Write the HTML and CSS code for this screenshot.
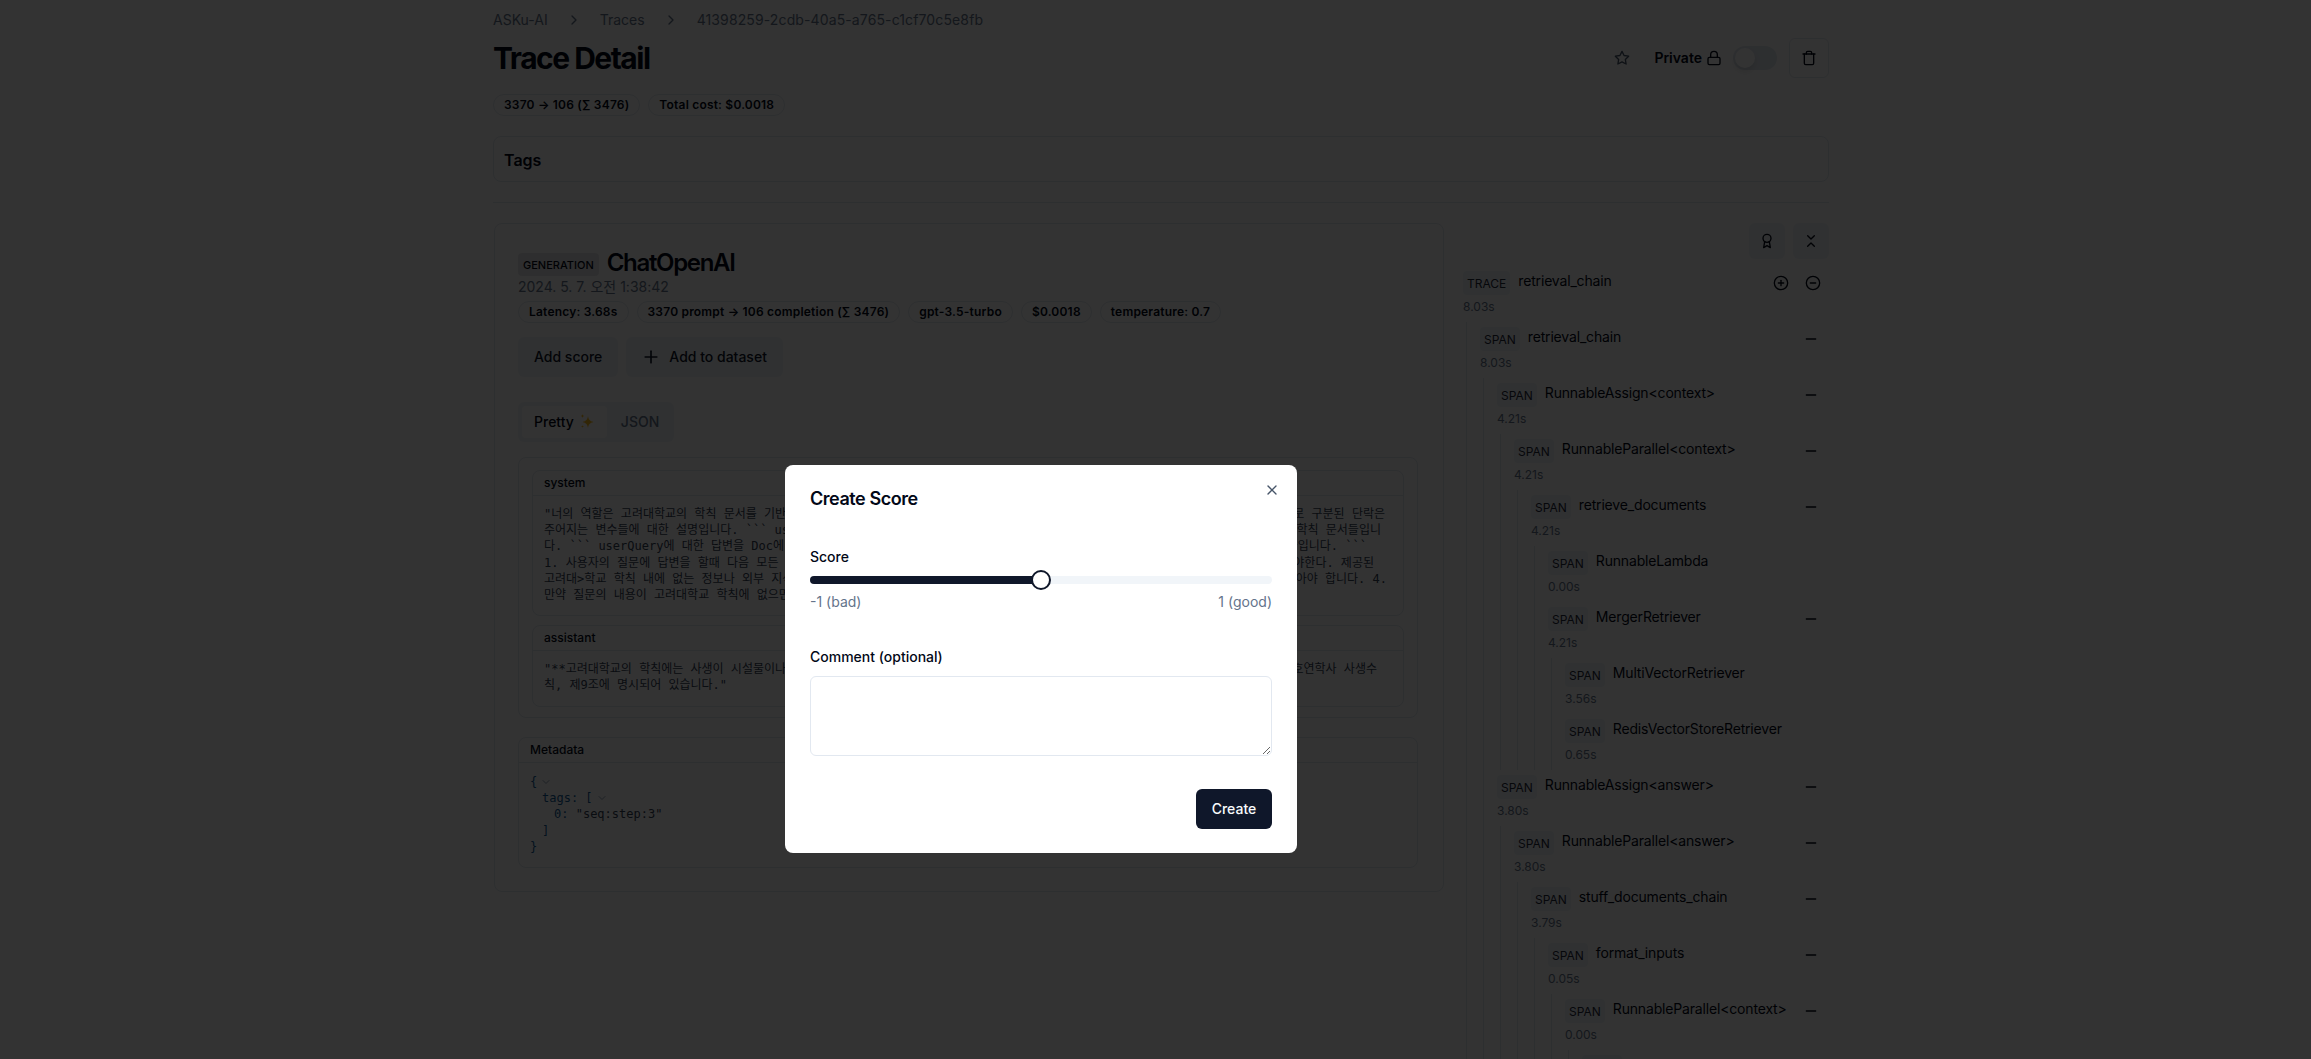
FILE: index.html
```html
<!DOCTYPE html>
<html lang="en">
<head>
    <meta charset="UTF-8">
    <meta name="viewport" content="width=device-width, initial-scale=1.0">
    <title>Trace Detail</title>
    <link rel="stylesheet" href="styles.css">
</head>
<body>
    <!-- icon set -->
    <svg class="icon-defs" aria-hidden="true">
        <symbol id="i-chevron-right" viewBox="0 0 24 24"><path d="m9 18 6-6-6-6"/></symbol>
        <symbol id="i-chevron-down" viewBox="0 0 24 24"><path d="m6 9 6 6 6-6"/></symbol>
        <symbol id="i-star" viewBox="0 0 24 24"><polygon points="12 2 15.09 8.26 22 9.27 17 14.14 18.18 21.02 12 17.77 5.82 21.02 7 14.14 2 9.27 8.91 8.26 12 2"/></symbol>
        <symbol id="i-lock" viewBox="0 0 24 24"><rect x="3" y="11" width="18" height="11" rx="2" ry="2"/><path d="M7 11V7a5 5 0 0 1 10 0v4"/></symbol>
        <symbol id="i-trash" viewBox="0 0 24 24"><path d="M3 6h18"/><path d="M19 6v14c0 1-1 2-2 2H7c-1 0-2-1-2-2V6"/><path d="M8 6V4c0-1 1-2 2-2h4c1 0 2 1 2 2v2"/></symbol>
        <symbol id="i-award" viewBox="0 0 24 24"><circle cx="12" cy="8" r="6"/><path d="M15.477 12.89 17 22l-5-3-5 3 1.523-9.11"/></symbol>
        <symbol id="i-collapse" viewBox="0 0 24 24"><path d="m7 20 5-5 5 5"/><path d="m7 4 5 5 5-5"/></symbol>
        <symbol id="i-plus" viewBox="0 0 24 24"><path d="M5 12h14"/><path d="M12 5v14"/></symbol>
        <symbol id="i-minus" viewBox="0 0 24 24"><path d="M5 12h14"/></symbol>
        <symbol id="i-plus-circle" viewBox="0 0 24 24"><circle cx="12" cy="12" r="10"/><path d="M8 12h8"/><path d="M12 8v8"/></symbol>
        <symbol id="i-minus-circle" viewBox="0 0 24 24"><circle cx="12" cy="12" r="10"/><path d="M8 12h8"/></symbol>
        <symbol id="i-x" viewBox="0 0 24 24"><path d="M18 6 6 18"/><path d="m6 6 12 12"/></symbol>
    </svg>

    <div class="page">
        <nav class="breadcrumb">
            <span>ASKu-AI</span>
            <svg class="icon crumb-sep"><use href="#i-chevron-right"/></svg>
            <span>Traces</span>
            <svg class="icon crumb-sep"><use href="#i-chevron-right"/></svg>
            <span class="crumb-id">41398259-2cdb-40a5-a765-c1cf70c5e8fb</span>
        </nav>

        <header class="page-header">
            <h1>Trace Detail</h1>
            <div class="header-actions">
                <span class="star-btn"><svg class="icon icon-muted"><use href="#i-star"/></svg></span>
                <span class="private-label">Private</span>
                <svg class="icon"><use href="#i-lock"/></svg>
                <span class="switch"><span class="switch-thumb"></span></span>
                <span class="outline-btn"><svg class="icon"><use href="#i-trash"/></svg></span>
            </div>
        </header>

        <div class="badge-row summary-badges">
            <span class="badge">3370 → 106 (∑ 3476)</span>
            <span class="badge">Total cost: $0.0018</span>
        </div>

        <section class="tags-card">Tags</section>
        <hr class="divider">

        <div class="detail-grid">
            <main class="generation-card">
                <div class="generation-title">
                    <span class="type-badge">GENERATION</span>
                    <h2>ChatOpenAI</h2>
                </div>
                <p class="timestamp">2024. 5. 7. 오전 1:38:42</p>
                <div class="badge-row meta-badges">
                    <span class="badge">Latency: 3.68s</span>
                    <span class="badge">3370 prompt → 106 completion (∑ 3476)</span>
                    <span class="badge">gpt-3.5-turbo</span>
                    <span class="badge">$0.0018</span>
                    <span class="badge">temperature: 0.7</span>
                </div>
                <div class="button-row">
                    <button class="soft-btn">Add score</button>
                    <button class="soft-btn"><svg class="icon icon-plus"><use href="#i-plus"/></svg>Add to dataset</button>
                </div>
                <div class="tabs">
                    <span class="tab tab-active">Pretty
                        <svg class="sparkle" viewBox="0 0 16 16"><path d="M9 2c.6 3.600 1.700 5 5.500 6-3.800 1-4.900 2.400-5.500 6-.6-3.600-1.700-5-5.500-6C7.300 7 8.400 5.600 9 2z"/><path d="M3.500 0c.2 1.200.6 1.700 1.800 2-1.200.3-1.600.8-1.800 2-.2-1.200-.6-1.700-1.800-2 1.200-.3 1.600-.8 1.800-2z"/><path d="M3.500 11c.2 1 .5 1.300 1.500 1.500-1 .2-1.300.5-1.500 1.500-.2-1-.5-1.300-1.500-1.500 1-.2 1.300-.5 1.500-1.500z"/></svg>
                    </span>
                    <span class="tab">JSON</span>
                </div>

                <div class="io-wrapper">
                    <section class="io-card">
                        <div class="io-head">system</div>
                        <div class="io-body io-message">
                            <div class="msg-line"><span>"너의 역할은 고려대학교의 학칙 문서를 기반으로 답변</span><span>로 구분된 단락은</span></div>
                            <div class="msg-line"><span>주어지는 변수들에 대한 설명입니다. ``` userQuery</span><span>학칙 문서들입니</span></div>
                            <div class="msg-line"><span>다. ``` userQuery에 대한 답변을 Doc에 있는</span><span>들입니다. ```</span></div>
                            <div class="msg-line"><span>1. 사용자의 질문에 답변을 할때 다음 모든 규칙을</span><span>야한다. 제공된</span></div>
                            <div class="msg-line"><span>고려대>학교 학칙 내에 없는 정보나 외부 지식을</span><span>않아야 합니다. 4.</span></div>
                            <div class="msg-line"><span>만약 질문의 내용이 고려대학교 학칙에 없으면 답변</span></div>
                        </div>
                    </section>
                    <section class="io-card assistant-card">
                        <div class="io-head">assistant</div>
                        <div class="io-body io-message">
                            <div class="msg-line"><span>"**고려대학교의 학칙에는 사생이 시설물이나 기물을</span><span>호연학사 사생수</span></div>
                            <div class="msg-line"><span>칙, 제9조에 명시되어 있습니다."</span></div>
                        </div>
                    </section>
                </div>

                <section class="io-card metadata-card">
                    <div class="io-head">Metadata</div>
                    <div class="io-body json-view">
                        <div><span class="json-key">{</span><svg class="icon json-toggle"><use href="#i-chevron-down"/></svg></div>
                        <div class="indent-1"><span class="json-key">tags: [</span><svg class="icon json-toggle"><use href="#i-chevron-down"/></svg></div>
                        <div class="indent-2"><span class="json-key">0:</span> <span class="json-string">"seq:step:3"</span></div>
                        <div class="indent-1"><span class="json-key">]</span></div>
                        <div><span class="json-key">}</span></div>
                    </div>
                </section>
            </main>

            <aside class="trace-panel">
                <div class="panel-tools">
                    <span class="square-btn"><svg class="icon"><use href="#i-award"/></svg></span>
                    <span class="square-btn"><svg class="icon"><use href="#i-collapse"/></svg></span>
                </div>

                <div class="tree">
                    <div class="node">
                        <div class="row">
                            <div class="row-info">
                                <div class="row-head"><span class="kind">TRACE</span><span class="name">retrieval_chain</span></div>
                                <div class="dur">8.03s</div>
                            </div>
                            <div class="row-actions">
                                <svg class="icon"><use href="#i-plus-circle"/></svg>
                                <svg class="icon"><use href="#i-minus-circle"/></svg>
                            </div>
                        </div>
                        <div class="children">
                            <div class="node">
                                <div class="row">
                                    <div class="row-info">
                                        <div class="row-head"><span class="kind">SPAN</span><span class="name">retrieval_chain</span></div>
                                        <div class="dur">8.03s</div>
                                    </div>
                                    <svg class="icon fold"><use href="#i-minus"/></svg>
                                </div>
                                <div class="children">
                                    <div class="node">
                                        <div class="row">
                                            <div class="row-info">
                                                <div class="row-head"><span class="kind">SPAN</span><span class="name">RunnableAssign&lt;context&gt;</span></div>
                                                <div class="dur">4.21s</div>
                                            </div>
                                            <svg class="icon fold"><use href="#i-minus"/></svg>
                                        </div>
                                        <div class="children">
                                            <div class="node">
                                                <div class="row">
                                                    <div class="row-info">
                                                        <div class="row-head"><span class="kind">SPAN</span><span class="name">RunnableParallel&lt;context&gt;</span></div>
                                                        <div class="dur">4.21s</div>
                                                    </div>
                                                    <svg class="icon fold"><use href="#i-minus"/></svg>
                                                </div>
                                                <div class="children">
                                                    <div class="node">
                                                        <div class="row">
                                                            <div class="row-info">
                                                                <div class="row-head"><span class="kind">SPAN</span><span class="name">retrieve_documents</span></div>
                                                                <div class="dur">4.21s</div>
                                                            </div>
                                                            <svg class="icon fold"><use href="#i-minus"/></svg>
                                                        </div>
                                                        <div class="children">
                                                            <div class="node">
                                                                <div class="row">
                                                                    <div class="row-info">
                                                                        <div class="row-head"><span class="kind">SPAN</span><span class="name">RunnableLambda</span></div>
                                                                        <div class="dur">0.00s</div>
                                                                    </div>
                                                                </div>
                                                            </div>
                                                            <div class="node">
                                                                <div class="row">
                                                                    <div class="row-info">
                                                                        <div class="row-head"><span class="kind">SPAN</span><span class="name">MergerRetriever</span></div>
                                                                        <div class="dur">4.21s</div>
                                                                    </div>
                                                                    <svg class="icon fold"><use href="#i-minus"/></svg>
                                                                </div>
                                                                <div class="children">
                                                                    <div class="node">
                                                                        <div class="row">
                                                                            <div class="row-info">
                                                                                <div class="row-head"><span class="kind">SPAN</span><span class="name">MultiVectorRetriever</span></div>
                                                                                <div class="dur">3.56s</div>
                                                                            </div>
                                                                        </div>
                                                                    </div>
                                                                    <div class="node">
                                                                        <div class="row">
                                                                            <div class="row-info">
                                                                                <div class="row-head"><span class="kind">SPAN</span><span class="name">RedisVectorStoreRetriever</span></div>
                                                                                <div class="dur">0.65s</div>
                                                                            </div>
                                                                        </div>
                                                                    </div>
                                                                </div>
                                                            </div>
                                                        </div>
                                                    </div>
                                                </div>
                                            </div>
                                        </div>
                                    </div>
                                    <div class="node">
                                        <div class="row">
                                            <div class="row-info">
                                                <div class="row-head"><span class="kind">SPAN</span><span class="name">RunnableAssign&lt;answer&gt;</span></div>
                                                <div class="dur">3.80s</div>
                                            </div>
                                            <svg class="icon fold"><use href="#i-minus"/></svg>
                                        </div>
                                        <div class="children">
                                            <div class="node">
                                                <div class="row">
                                                    <div class="row-info">
                                                        <div class="row-head"><span class="kind">SPAN</span><span class="name">RunnableParallel&lt;answer&gt;</span></div>
                                                        <div class="dur">3.80s</div>
                                                    </div>
                                                    <svg class="icon fold"><use href="#i-minus"/></svg>
                                                </div>
                                                <div class="children">
                                                    <div class="node">
                                                        <div class="row">
                                                            <div class="row-info">
                                                                <div class="row-head"><span class="kind">SPAN</span><span class="name">stuff_documents_chain</span></div>
                                                                <div class="dur">3.79s</div>
                                                            </div>
                                                            <svg class="icon fold"><use href="#i-minus"/></svg>
                                                        </div>
                                                        <div class="children">
                                                            <div class="node">
                                                                <div class="row">
                                                                    <div class="row-info">
                                                                        <div class="row-head"><span class="kind">SPAN</span><span class="name">format_inputs</span></div>
                                                                        <div class="dur">0.05s</div>
                                                                    </div>
                                                                    <svg class="icon fold"><use href="#i-minus"/></svg>
                                                                </div>
                                                                <div class="children">
                                                                    <div class="node">
                                                                        <div class="row">
                                                                            <div class="row-info">
                                                                                <div class="row-head"><span class="kind">SPAN</span><span class="name">RunnableParallel&lt;context&gt;</span></div>
                                                                                <div class="dur">0.00s</div>
                                                                            </div>
                                                                            <svg class="icon fold"><use href="#i-minus"/></svg>
                                                                        </div>
                                                                        <div class="children">
                                                                            <div class="node">
                                                                                <div class="row">
                                                                                    <div class="row-info">
                                                                                        <div class="row-head"><span class="kind">SPAN</span><span class="name">RunnableLambda</span></div>
                                                                                        <div class="dur">0.00s</div>
                                                                                    </div>
                                                                                </div>
                                                                            </div>
                                                                        </div>
                                                                    </div>
                                                                </div>
                                                            </div>
                                                        </div>
                                                    </div>
                                                </div>
                                            </div>
                                        </div>
                                    </div>
                                </div>
                            </div>
                        </div>
                    </div>
                </div>
            </aside>
        </div>
    </div>

    <div class="overlay">
        <div class="modal">
            <svg class="icon modal-close"><use href="#i-x"/></svg>
            <h3>Create Score</h3>
            <label class="field-label score-label">Score</label>
            <div class="slider">
                <div class="slider-track"><div class="slider-fill"></div></div>
                <span class="slider-thumb"></span>
            </div>
            <div class="slider-labels">
                <span>-1 (bad)</span>
                <span>1 (good)</span>
            </div>
            <label class="field-label comment-label" for="comment">Comment (optional)</label>
            <textarea id="comment" class="comment-input"></textarea>
            <div class="modal-footer">
                <button class="primary-btn">Create</button>
            </div>
        </div>
    </div>
</body>
</html>
```

FILE: styles.css
```css
* {
    box-sizing: border-box;
}

html, body {
    height: 1059px;
    overflow: hidden;
}

body {
    margin: 0;
    background-color: #fff;
    color: #020817;
    font-family: Inter, "Noto Sans CJK KR", sans-serif;
    font-size: 14px;
    line-height: 20px;
}

h1, h2, h3, p {
    margin: 0;
}

.icon-defs {
    display: none;
}

.icon {
    width: 16px;
    height: 16px;
    flex: none;
    fill: none;
    stroke: currentColor;
    stroke-width: 2;
    stroke-linecap: round;
    stroke-linejoin: round;
}

.icon-muted {
    color: #475569;
}

.page {
    width: 1336px;
    margin-left: 493px;
    padding-top: 10px;
}

.breadcrumb {
    display: flex;
    align-items: center;
    color: #64748b;
}

.crumb-sep {
    margin: 0 18px;
}

.crumb-id {
    letter-spacing: 0.12px;
}

.page-header {
    display: flex;
    align-items: center;
    justify-content: space-between;
    height: 40px;
    margin-top: 8px;
}

.page-header h1 {
    font-size: 30px;
    line-height: 36px;
    font-weight: 700;
    letter-spacing: -0.05em;
}

.header-actions {
    display: flex;
    align-items: center;
}

.star-btn {
    display: flex;
    justify-content: center;
    width: 40px;
    margin-right: 12px;
}

.private-label {
    font-weight: 600;
    margin-right: 4px;
}

.switch {
    display: flex;
    align-items: center;
    width: 44px;
    height: 24px;
    margin: 0 12px 0 11px;
    padding: 2px;
    background-color: #e2e8f0;
    border-radius: 12px;
}

.switch-thumb {
    width: 20px;
    height: 20px;
    background-color: #fff;
    border-radius: 50%;
    box-shadow: 0 4px 6px rgba(0, 0, 0, 0.1);
}

.outline-btn {
    display: flex;
    align-items: center;
    justify-content: center;
    width: 40px;
    height: 40px;
    border: 1px solid #e2e8f0;
    border-radius: 6px;
}

.badge-row {
    display: flex;
    gap: 8px;
}

.summary-badges {
    margin-top: 16px;
}

.badge {
    padding: 2px 10px;
    border: 1px solid #e2e8f0;
    border-radius: 999px;
    font-size: 12px;
    line-height: 16px;
    font-weight: 600;
    letter-spacing: 0.2px;
}

.tags-card {
    height: 46px;
    margin-top: 20px;
    padding: 12px 10px;
    border: 1px solid #e2e8f0;
    border-radius: 8px;
    font-size: 16px;
    line-height: 22px;
    font-weight: 600;
}

.divider {
    height: 1px;
    margin: 20px 0;
    border: 0;
    background-color: #e2e8f0;
}

.detail-grid {
    display: grid;
    grid-template-columns: 950px 1fr;
    column-gap: 19px;
    padding-left: 1px;
}

.generation-card {
    height: 669px;
    padding: 23px 23px;
    border: 1px solid #e2e8f0;
    border-radius: 8px;
}

.generation-title {
    display: flex;
    align-items: flex-start;
    gap: 8px;
}

.generation-title h2 {
    font-size: 24px;
    line-height: 32px;
    font-weight: 600;
    letter-spacing: -0.055em;
}

.type-badge {
    margin-top: 6px;
    padding: 0 5px;
    height: 23px;
    background-color: #e7e7e9;
    border-radius: 4px;
    font-size: 11px;
    line-height: 25px;
    font-weight: 500;
}

.timestamp {
    margin-top: -2px;
    color: #64748b;
}

.meta-badges {
    margin-top: 4px;
}

.button-row {
    display: flex;
    gap: 8px;
    margin-top: 14px;
}

.soft-btn {
    display: flex;
    align-items: center;
    height: 40px;
    padding: 0 16px;
    border: 0;
    border-radius: 6px;
    background-color: #f1f5f9;
    color: #0f172a;
    font: 500 14px/20px Inter, sans-serif;
}

.icon-plus {
    width: 20px;
    height: 20px;
    margin: 0 8px 0 -1px;
}

.tabs {
    display: flex;
    width: 156px;
    height: 40px;
    margin-top: 25px;
    padding: 4px;
    background-color: #f1f5f9;
    border-radius: 6px;
}

.tab {
    display: flex;
    align-items: center;
    padding: 0 12px;
    color: #64748b;
    font-weight: 500;
}

.tab + .tab {
    padding-left: 14px;
}

.tab-active {
    width: 85px;
    background-color: #fff;
    color: #020817;
    border-radius: 4px;
}

.sparkle {
    width: 16px;
    height: 16px;
    margin-left: 5px;
    fill: #fbbf24;
}

.io-wrapper {
    width: 900px;
    height: 261px;
    margin-top: 15px;
    padding: 12px 13px;
    border: 1px solid #e2e8f0;
    border-radius: 8px;
}

.io-card {
    border: 1px solid #e2e8f0;
    border-radius: 8px;
}

.assistant-card {
    margin-top: 9px;
}

.metadata-card {
    width: 900px;
    margin-top: 19px;
}

.io-head {
    height: 25px;
    padding: 0 11px;
    border-bottom: 1px solid #e2e8f0;
    font-size: 12px;
    line-height: 24px;
    font-weight: 450;
}

.io-body {
    padding: 10px 11px 12px;
    font-family: "DejaVu Sans Mono", "Noto Sans CJK KR", monospace;
    font-size: 12px;
    line-height: 16.2px;
}

.io-message {
    color: #334155;
}

.msg-line {
    display: flex;
    justify-content: space-between;
    white-space: pre;
}

.io-card:first-child .msg-line:nth-child(1) {
    padding-right: 7px;
}

.io-card:first-child .msg-line:nth-child(2) {
    padding-right: 11px;
}

.io-card:first-child .msg-line:nth-child(3) {
    padding-right: 25px;
}

.io-card:first-child .msg-line:nth-child(4) {
    padding-right: 18px;
}

.io-card:first-child .msg-line:nth-child(5) {
    padding-right: 5px;
}

.assistant-card .msg-line {
    padding-right: 15px;
}

.json-view {
    padding-top: 11px;
}

.json-key {
    color: #0f5a96;
}

.json-string {
    color: #334155;
}

.json-toggle {
    width: 12px;
    height: 12px;
    margin-left: 3px;
    vertical-align: -2px;
    color: #94a3b8;
}

.indent-1 {
    padding-left: 12px;
}

.indent-2 {
    padding-left: 24px;
}

.panel-tools {
    display: flex;
    justify-content: flex-end;
    gap: 8px;
}

.square-btn {
    display: flex;
    align-items: center;
    justify-content: center;
    width: 36px;
    height: 36px;
    background-color: #f1f5f9;
    border-radius: 6px;
}

.tree {
    margin-top: 12px;
    padding-right: 8px;
}

.row {
    display: flex;
    justify-content: space-between;
    height: 51px;
}

.row-head {
    display: flex;
    align-items: flex-start;
    gap: 8px;
}

.kind {
    height: 24px;
    padding: 0 4px;
    background-color: #f1f5f9;
    border-radius: 4px;
    color: #1e293b;
    font-size: 12px;
    line-height: 26px;
}

.name {
    letter-spacing: -0.17px;
}

.dur {
    margin-top: 4px;
    color: #64748b;
    font-size: 12px;
    line-height: 16px;
}

.row-actions {
    display: flex;
    gap: 16px;
    padding-top: 4px;
}

.fold {
    margin: 4px 2px 0 0;
}

.children {
    margin-left: 3px;
    padding-left: 13px;
    border-left: 1px solid #e2e8f0;
}

.children > .node {
    padding-top: 5px;
}

.overlay {
    position: fixed;
    inset: 0;
    background-color: rgba(0, 0, 0, 0.8);
}

.modal {
    position: absolute;
    left: 785px;
    top: 465px;
    width: 512px;
    height: 388px;
    padding: 25px 25px;
    background-color: #fff;
    border-radius: 8px;
}

.modal-close {
    position: absolute;
    top: 17px;
    right: 17px;
    color: #475569;
}

.modal h3 {
    font-size: 18px;
    line-height: 18px;
    font-weight: 600;
    letter-spacing: -0.025em;
}

.field-label {
    display: block;
    font-weight: 450;
}

.score-label {
    margin-top: 39px;
}

.slider {
    position: relative;
    display: flex;
    align-items: center;
    height: 20px;
    margin-top: 3px;
}

.slider-track {
    width: 100%;
    height: 8px;
    background-color: #f1f5f9;
    border-radius: 4px;
    overflow: hidden;
}

.slider-fill {
    width: 50%;
    height: 100%;
    background-color: #0f172a;
}

.slider-thumb {
    position: absolute;
    left: calc(50% - 10px);
    width: 20px;
    height: 20px;
    background-color: #fff;
    border: 2px solid #0f172a;
    border-radius: 50%;
}

.slider-labels {
    display: flex;
    justify-content: space-between;
    margin-top: 2px;
    color: #64748b;
}

.comment-label {
    margin-top: 35px;
}

.comment-input {
    display: block;
    width: 100%;
    height: 80px;
    margin-top: 9px;
    border: 1px solid #e2e8f0;
    border-radius: 6px;
    background-color: #fff;
    outline: 0;
}

.modal-footer {
    display: flex;
    justify-content: flex-end;
    margin-top: 33px;
}

.primary-btn {
    width: 76px;
    height: 40px;
    border: 0;
    border-radius: 6px;
    background-color: #0f172a;
    color: #f8fafc;
    font: 500 14px/20px Inter, sans-serif;
}
```
